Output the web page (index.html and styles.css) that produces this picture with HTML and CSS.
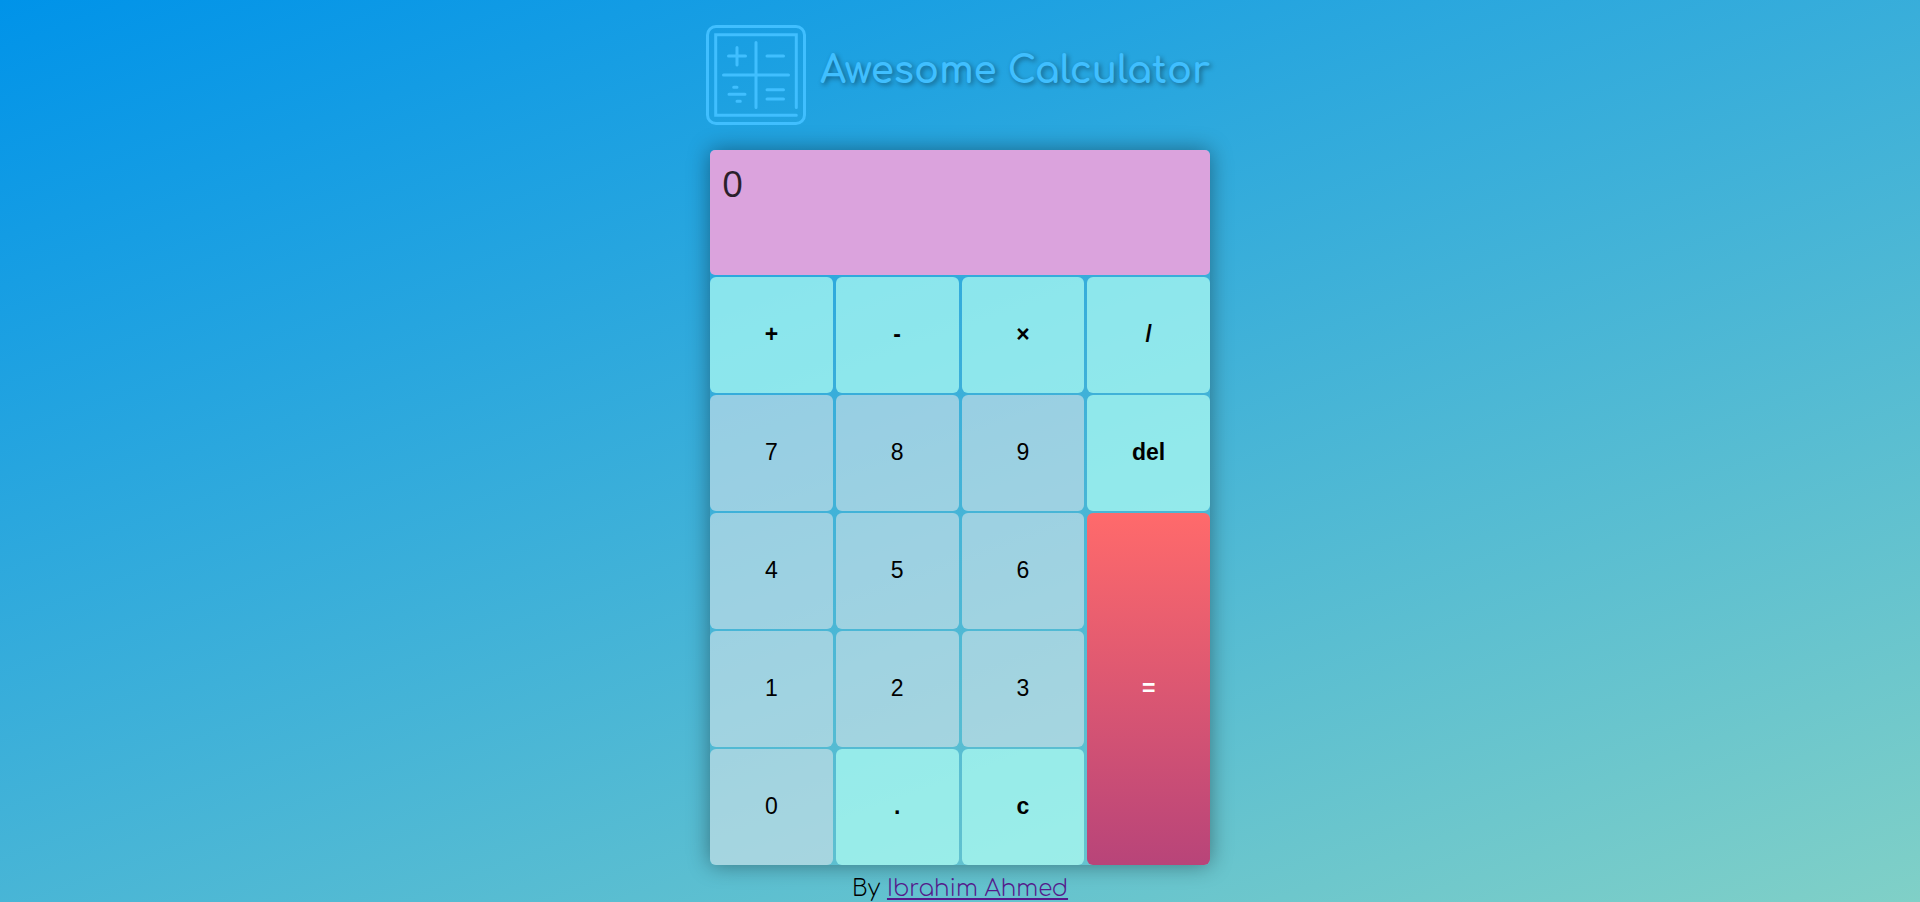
FILE: index.html
```html
<!DOCTYPE html>
<html lang="en">
<head>
<meta charset="utf-8">
<meta name="viewport" content="width=device-width, initial-scale=1">
<title>Awesome Calculator</title>
<link rel="stylesheet" href="styles.css">
</head>
<body>
<header class="header">
  <svg class="logo" viewBox="0 0 100 100" aria-hidden="true">
    <rect x="1.5" y="1.5" width="97" height="97" rx="8.5"/>
    <path d="M90.3 82.500V9.700H9.700V90.300H90.300"/>
    <path d="M50 17.500V82.500M17.500 50H82.500"/>
    <path d="M31 22.500V40M22.500 31H39.500M61 31H77.500"/>
    <path d="M23 69.300H39M27.700 62.300H31M31 76.300H34.300"/>
    <path d="M61 64.700H77.500M61 74H77.500"/>
  </svg>
  <h1 class="title">Awesome Calculator</h1>
</header>
<main class="calculator">
  <output class="display" aria-label="Result">0</output>
  <button class="key op" type="button">+</button>
  <button class="key op" type="button">-</button>
  <button class="key op" type="button">×</button>
  <button class="key op" type="button">/</button>
  <button class="key" type="button">7</button>
  <button class="key" type="button">8</button>
  <button class="key" type="button">9</button>
  <button class="key op" type="button">del</button>
  <button class="key" type="button">4</button>
  <button class="key" type="button">5</button>
  <button class="key" type="button">6</button>
  <button class="key equals" type="button">=</button>
  <button class="key" type="button">1</button>
  <button class="key" type="button">2</button>
  <button class="key" type="button">3</button>
  <button class="key" type="button">0</button>
  <button class="key op" type="button">.</button>
  <button class="key op" type="button">c</button>
</main>
<footer class="footer">By <a href="#">Ibrahim Ahmed</a></footer>
</body>
</html>
```

FILE: styles.css
```css
* {
  box-sizing: border-box;
}

body {
  margin: 0;
  min-height: 100vh;
  display: flex;
  flex-direction: column;
  align-items: center;
  background: linear-gradient(160deg, #0093e9 0%, #80d0c7 100%) no-repeat;
  font-family: Comfortaa, Quicksand, Lato, sans-serif;
}

.header {
  display: flex;
  gap: 14px;
  padding: 25px 4px 25px 0;
}

.logo {
  width: 100px;
  height: 100px;
  fill: none;
  stroke: #40bfff;
  stroke-width: 3;
  stroke-linecap: round;
}

.title {
  margin: 0;
  padding-top: 18px;
  color: #40bfff;
  font-size: 37px;
  line-height: 56px;
  font-weight: 700;
  text-shadow: 2px 2px 5px rgba(0, 0, 0, 0.4);
}

.calculator {
  display: grid;
  grid-template-columns: repeat(4, 1fr);
  grid-template-rows: 125px;
  grid-auto-rows: 116px;
  gap: 2px 3px;
  width: 100%;
  max-width: 500px;
  border-radius: 5px;
  box-shadow: 0 0 22px rgba(0, 0, 0, 0.4);
}

.display {
  grid-column: 1 / -1;
  padding: 8px 12px;
  border-radius: 5px;
  background: #dba3dd;
  color: #2b1f2b;
  font-family: "Open Sans", sans-serif;
  font-size: 37px;
  line-height: 50px;
}

.key {
  padding: 0 0 2px;
  border: 0;
  border-radius: 6px;
  background: rgba(215, 228, 233, 0.6);
  color: #000;
  font-family: "Liberation Sans", Arial, sans-serif;
  font-size: 23px;
  cursor: pointer;
}

.op {
  background: rgba(178, 255, 243, 0.7);
  font-weight: 700;
}

.equals {
  grid-row: span 3;
  background: linear-gradient(#ff6a6b, #b84479);
  color: #fff;
  font-weight: 700;
}

.footer {
  padding-top: 11px;
  font-size: 23px;
  font-weight: 300;
  line-height: 26px;
}

.footer a {
  color: #551a8b;
}
```
